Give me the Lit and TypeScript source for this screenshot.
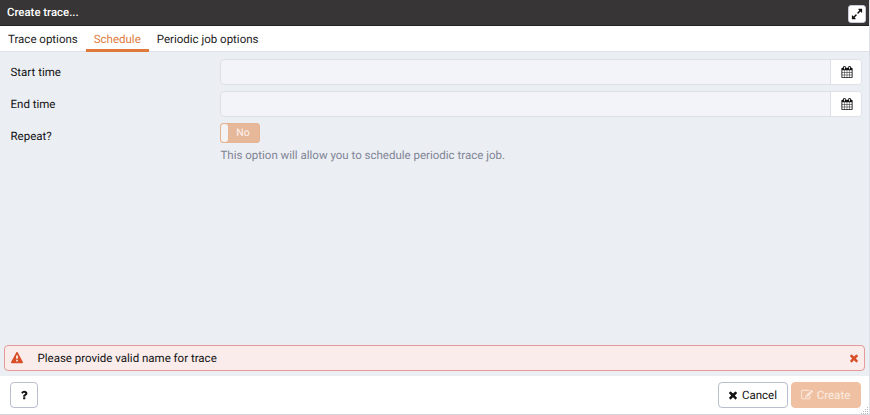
import { LitElement, html, css, svg } from "lit";
import { customElement, property } from "lit/decorators.js";

const ICONS: Record<string, string> = {
  times: "M1490 1322q0 40-28 68l-136 136q-28 28-68 28t-68-28l-294-294-294 294q-28 28-68 28t-68-28l-136-136q-28-28-28-68t28-68l294-294-294-294q-28-28-28-68t28-68l136-136q28-28 68-28t68 28l294 294 294-294q28-28 68-28t68 28l136 136q28 28 28 68t-28 68l-294 294 294 294q28 28 28 68z",
  warning: "M1024 1375v-190q0-14-9.5-23.5t-22.5-9.5h-192q-13 0-22.5 9.5t-9.5 23.5v190q0 14 9.5 23.5t22.5 9.5h192q13 0 22.5-9.5t9.5-23.5zm-2-374l18-459q0-12-10-19-13-11-24-11h-220q-11 0-24 11-10 7-10 21l17 457q0 10 10 16.5t24 6.5h185q14 0 23.5-6.5t10.5-16.5zm-14-934l768 1408q35 63-2 126-17 29-46.5 46t-63.5 17h-1536q-34 0-63.5-17t-46.5-46q-37-63-2-126l768-1408q17-31 47-49t65-18 65 18 47 49z",
  calendar: "M192 1664h288v-288h-288v288zm352 0h320v-288h-320v288zm-352-352h288v-320h-288v320zm352 0h320v-320h-320v320zm-352-384h288v-288h-288v288zm736 736h320v-288h-320v288zm-384-736h320v-288h-320v288zm768 736h288v-288h-288v288zm-384-352h320v-320h-320v320zm-352-864v-288q0-13-9.5-22.5t-22.5-9.5h-64q-13 0-22.5 9.5t-9.5 22.5v288q0 13 9.5 22.5t22.5 9.5h64q13 0 22.5-9.5t9.5-22.5zm736 864h288v-320h-288v320zm-384-384h320v-288h-320v288zm384 0h288v-288h-288v288zm32-480v-288q0-13-9.5-22.5t-22.5-9.5h-64q-13 0-22.5 9.5t-9.5 22.5v288q0 13 9.5 22.5t22.5 9.5h64q13 0 22.5-9.5t9.5-22.5zm384-64v1280q0 52-38 90t-90 38h-1408q-52 0-90-38t-38-90v-1280q0-52 38-90t90-38h128v-96q0-66 47-113t113-47h64q66 0 113 47t47 113v96h384v-96q0-66 47-113t113-47h64q66 0 113 47t47 113v96h128q52 0 90 38t38 90z",
  edit: "M888 1184l116-116-152-152-116 116v56h96v96h56zm440-720q-16-16-33 1l-350 350q-17 17-1 33t33-1l350-350q17-17 1-33zm80 594v190q0 119-84.5 203.5t-203.5 84.5h-832q-119 0-203.5-84.5t-84.5-203.5v-832q0-119 84.5-203.5t203.5-84.5h832q63 0 117 25 15 7 18 23 3 17-9 29l-49 49q-14 14-32 8-23-6-45-6h-832q-66 0-113 47t-47 113v832q0 66 47 113t113 47h832q66 0 113-47t47-113v-126q0-13 9-22l64-64q15-15 35-7t20 29zm-96-738l288 288-672 672h-288v-288zm444 132l-92 92-288-288 92-92q28-28 68-28t68 28l152 152q28 28 28 68t-28 68z",
  expand: "M883 1056q0 13-10 23l-332 332 144 144q19 19 19 45t-19 45-45 19h-448q-26 0-45-19t-19-45v-448q0-26 19-45t45-19 45 19l144 144 332-332q10-10 23-10t23 10l114 114q10 10 10 23zm781-864v448q0 26-19 45t-45 19-45-19l-144-144-332 332q-10 10-23 10t-23-10l-114-114q-10-10-10-23t10-23l332-332-144-144q-19-19-19-45t19-45 45-19h448q26 0 45 19t19 45z",
  question: "M1088 1256v240q0 16-12 28t-28 12h-240q-16 0-28-12t-12-28v-240q0-16 12-28t28-12h240q16 0 28 12t12 28zm316-600q0 54-15.5 101t-35 76.5-55 59.5-57.5 43.5-61 35.5q-41 23-68.5 65t-27.5 67q0 17-12 32.5t-28 15.5h-240q-15 0-25.5-18.5t-10.5-37.5v-45q0-83 65-156.5t143-108.5q59-27 84-56t25-76q0-42-46.5-74t-107.5-32q-65 0-108 29-35 25-107 115-13 16-31 16-12 0-25-8l-164-125q-13-10-15.5-25t5.5-28q160-266 464-266 80 0 161 31t146 83 106 127.5 41 158.5z",
};

@customElement("fa-icon")
export class FaIcon extends LitElement {
  @property() name = "";
  static styles = css`
    :host { display: inline-flex; flex: none; width: 12px; height: 12px; }
    svg { width: 100%; height: 100%; fill: currentColor; overflow: visible; }
  `;
  render() {
    return html`<svg viewBox="0 0 1792 1792" aria-hidden="true">${svg`<path d=${ICONS[this.name] ?? ""}></path>`}</svg>`;
  }
}

@customElement("date-field")
export class DateField extends LitElement {
  @property() label = "";
  static styles = css`
    :host { display: flex; height: 26px; }
    .label { width: 209.5px; line-height: 26px; }
    .box { flex: 1; display: flex; box-sizing: border-box; border: 1px solid #dde0e6; border-radius: 4px; background: #f3f4f9; overflow: hidden; }
    .input { flex: 1; }
    .pick { width: 31px; display: flex; align-items: center; justify-content: center; box-sizing: border-box; background: #fff; border-left: 1px solid #dde0e6; color: #111; }
    .pick fa-icon { margin: 0 0 1px 1px; }
  `;
  render() {
    return html`<div class="label">${this.label}</div>
      <div class="box"><div class="input"></div><div class="pick"><fa-icon name="calendar"></fa-icon></div></div>`;
  }
}

@customElement("app-root")
export class AppRoot extends LitElement {
  static styles = css`
    :host { display: flex; flex-direction: column; position: relative; box-sizing: border-box; width: 870px; height: 415px; border-right: 1px solid #dde0e6; border-bottom: 1px solid #d4d6da; background: #ebeef3; color: #222; font: 11.5px/16px Roboto, sans-serif; text-rendering: geometricPrecision; overflow: hidden; }
    .title { flex: none; display: flex; align-items: center; justify-content: space-between; box-sizing: border-box; height: 26px; margin-right: -1px; padding: 0 4px 1px 7px; background: #373536; border-bottom: 1px solid #222; color: #fff; font-weight: 500; font-size: 11.4px; }
    .expand { display: flex; align-items: center; justify-content: center; box-sizing: border-box; width: 18px; height: 18px; margin-top: 4px; background: #fff; border: 1px solid #c8cada; border-radius: 3px; color: #111; }
    .tabs { flex: none; display: flex; box-sizing: border-box; height: 26px; background: #fff; border-bottom: 1px solid #dde0e6; }
    .tab { box-sizing: border-box; height: 26px; padding: 0 8px; line-height: 26px; }
    .active { color: #de7b3c; border-bottom: 3px solid #e0793a; }
    .form { flex: 1; display: flex; flex-direction: column; gap: 6px; padding: 7px 7px 0 10.5px; color: #111; }
    .row { display: flex; }
    .label { width: 209.5px; line-height: 26px; }
    .toggle { display: flex; align-items: center; box-sizing: border-box; width: 40px; height: 20px; border: 1px solid #e6b493; border-radius: 3px; background: #e7b799; color: #fbf3ee; font-size: 10.5px; }
    .knob { width: 7px; height: 18px; border-radius: 3px; background: #f3f3f5; }
    .no { flex: 1; text-align: center; line-height: 16px; padding-right: 1px; }
    .hint { color: #808495; margin: 4px 0 0 .5px; }
    .alert { flex: none; display: flex; align-items: center; box-sizing: border-box; height: 26px; margin: 0 4px 5px; padding: 0 4.5px 0 6px; border: 1px solid #e59a9a; border-radius: 4px; background: #f9eceb; color: #111; }
    .alert fa-icon { color: #d84f28; }
    .msg { flex: 1; margin-left: 14.5px; }
    .footer { flex: none; display: flex; align-items: center; gap: 3px; box-sizing: border-box; height: 38px; padding: 0 8px 0 10px; background: #fff; }
    .btn { display: flex; align-items: center; justify-content: center; gap: 3px; box-sizing: border-box; height: 26px; border: 1px solid #b9bdcc; border-radius: 4px; background: #fff; color: #111; }
    .help { width: 28px; margin-right: auto; }
    .cancel { width: 70px; padding-right: 2px; }
    .create { width: 70px; gap: 4px; padding-right: 1px; background: #efc1a2; border-color: #efc1a2; color: #fbede3; }
    .grip { position: absolute; right: 0; bottom: 0; width: 8px; height: 7px; fill: #b5b7bd; }
  `;
  render() {
    return html`
      <div class="title"><span>Create trace...</span><span class="expand"><fa-icon name="expand"></fa-icon></span></div>
      <div class="tabs"><div class="tab">Trace options</div><div class="tab active">Schedule</div><div class="tab">Periodic job options</div></div>
      <div class="form">
        <date-field label="Start time"></date-field>
        <date-field label="End time"></date-field>
        <div class="row">
          <div class="label">Repeat?</div>
          <div><div class="toggle"><span class="knob"></span><span class="no">No</span></div>
          <div class="hint">This option will allow you to schedule periodic trace job.</div></div>
        </div>
      </div>
      <div class="alert"><fa-icon name="warning"></fa-icon><span class="msg">Please provide valid name for trace</span><fa-icon name="times"></fa-icon></div>
      <div class="footer">
        <div class="btn help"><fa-icon name="question"></fa-icon></div>
        <div class="btn cancel"><fa-icon name="times"></fa-icon><span>Cancel</span></div>
        <div class="btn create"><fa-icon name="edit"></fa-icon><span>Create</span></div>
      </div>
      <svg class="grip" viewBox="0 0 8 7"><path d="M6 0h1v1h-1zM4 2h1v1h-1zM6 2h1v1h-1zM2 4h1v1h-1zM4 4h1v1h-1zM6 4h1v1h-1zM0 6h1v1h-1zM2 6h1v1h-1zM4 6h1v1h-1zM6 6h1v1h-1z"></path></svg>
    `;
  }
}
